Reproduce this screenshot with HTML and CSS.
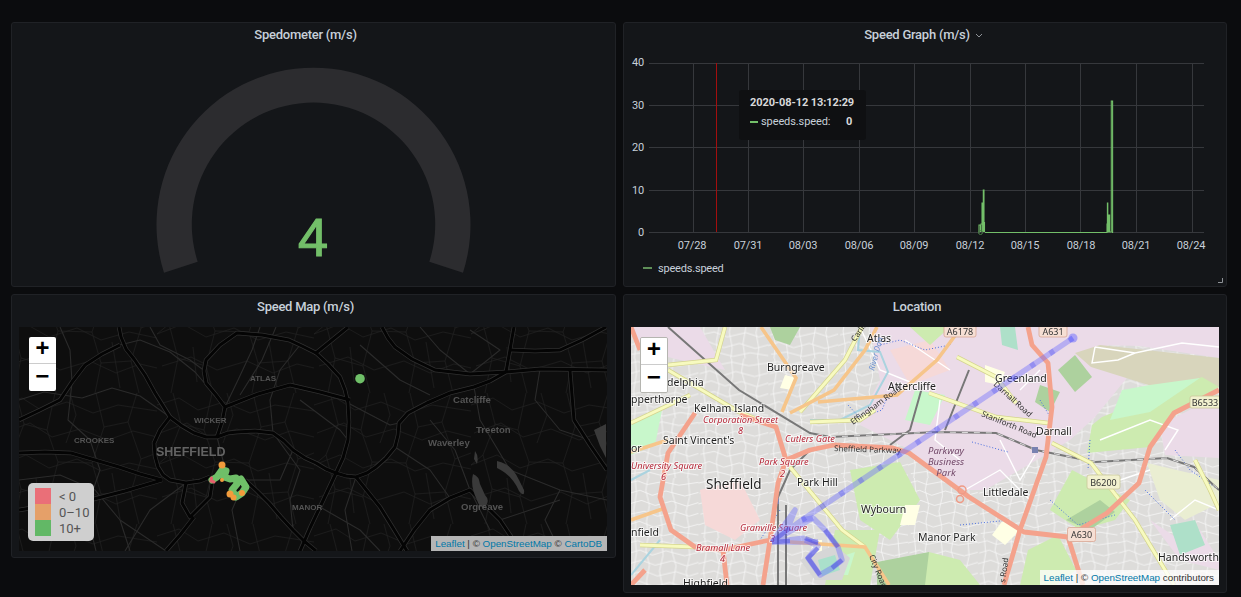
FILE: index.html
```html
<!DOCTYPE html>
<html lang="en">
<head>
<meta charset="utf-8">
<title>Speed dashboard</title>
<link rel="stylesheet" href="styles.css">
</head>
<body>
<main class="dash">

<section class="panel panel-top">
  <header class="title"><span>Spedometer (m/s)</span><i class="title-slot"></i></header>
  <svg class="gauge" viewBox="12 45 603 241" aria-label="Gauge">
    <path class="gauge-arc" d="M164 272.7A157 157 0 1 1 463 272.7L429.3 261.7A121.7 121.7 0 1 0 197.7 261.7Z"/>
    <text class="gauge-value" x="313" y="256">4</text>
  </svg>
</section>

<section class="panel panel-top graph-panel">
  <header class="title"><span>Speed Graph (m/s)</span><i class="title-slot"><svg class="chev" viewBox="0 0 16 16"><path d="M5 7l3 3 3-3"/></svg></i></header>
  <svg class="graph" viewBox="624 46 602 212">
    <g class="grid">
      <path d="M649 63.5H1204M649 105.5H1204M649 147.5H1204M649 190.5H1204M649 232.5H1204"/>
      <path d="M693.5 63V232M748.5 63V232M803.5 63V232M859.5 63V232M914.5 63V232M970.5 63V232M1025.5 63V232M1080.5 63V232M1136.5 63V232M1192.5 63V232"/>
    </g>
    <path class="redline" d="M716.5 63V232"/>
    <g class="ytick">
      <text x="644" y="66">40</text><text x="644" y="109">30</text><text x="644" y="151">20</text><text x="644" y="194">10</text><text x="644" y="236">0</text>
    </g>
    <g class="xtick">
      <text x="692" y="249">07/28</text><text x="748" y="249">07/31</text><text x="803" y="249">08/03</text><text x="859" y="249">08/06</text><text x="914" y="249">08/09</text><text x="970" y="249">08/12</text><text x="1025" y="249">08/15</text><text x="1081" y="249">08/18</text><text x="1136" y="249">08/21</text><text x="1191" y="249">08/24</text>
    </g>
    <path class="series" d="M979 232.5V225H980.5V232M981 232V224H982V203H982.6V232M983.3 232V190H984V232M984.5 232V222M985 232.5H1107V224H1107.4V203H1107.8V232H1108.6V215H1109.6V232H1111.3V101H1112.6V232.5H1112"/>
    <circle class="series-dot" cx="980.5" cy="232.5" r="2"/>
  </svg>
  <div class="legend"><i class="legend-line"></i><span>speeds.speed</span></div>
  <div class="tooltip">
    <div class="tip-time">2020-08-12 13:12:29</div>
    <div class="tip-row"><i class="tip-line"></i><span class="tip-name">speeds.speed:</span><b>0</b></div>
  </div>
  <svg class="resize" viewBox="0 0 6 6"><path d="M5.5 1V5.5H1"/></svg>
</section>

<section class="panel panel-map-a">
  <header class="title"><span>Speed Map (m/s)</span><i class="title-slot"></i></header>
  <div class="map map-dark">
    <svg class="map-svg" viewBox="19 327 588 224">
      <defs>
        <pattern id="dark-streets" width="157" height="131" patternUnits="userSpaceOnUse">
          <path class="dk-minor" d="M0 12L22 5 41 17 67 9 93 20 118 12 157 18M3 40L30 30 52 44 80 36 108 47 133 38 157 44M0 72L26 62 49 75 77 66 101 78 129 70 157 76M5 104L34 95 60 108 90 99 116 111 140 102 157 106"/>
          <path class="dk-minor" d="M16 0L24 31 12 62 21 96 14 131M55 0L47 37 58 69 49 104 56 131M96 0L104 34 92 70 101 101 95 131M137 0L128 29 141 66 131 99 139 131"/>
          <path class="dk-minor" d="M24 31L47 37M58 69L92 70M104 34L128 29M21 96L49 104M101 101L131 99M12 62L0 72M141 66L157 60M70 0L76 22 66 50M112 80L120 126M36 85L40 120"/>
        </pattern>
        <g id="dk-roads">
          <path d="M119 327L121 337 126 349 134 359 145 375 155 393 170 417 160 430 154 443 155 456 158 467 163 475 170 480 186 483 200 481 210 477"/>
          <path d="M170 417L182 426 194 433 206 437 217 437 228 433 237 432 255 431 273 433 284 441 293 450 305 458 316 463 326 469 336 473 346 476 356 477 367 473 376 467 386 458 395 447 398 435 399 423 408 413 427 403 450 393 474 387 490 381 506 372 540 369 607 370"/>
          <path d="M348 327L332 340 316 353 328 364 340 377 345 390 348 403 349 422 348 440 343 458 336 473 328 490 320 507 310 528 300 551"/>
          <path d="M382 327L388 338 395 347 412 359 435 370 470 374 506 372"/>
          <path d="M217 437L222 422 225 407 216 395 206 383 204 371 206 360 220 345 237 333 262 335 289 340 302 346 316 353"/>
          <path d="M19 453L45 452 71 453 95 460 119 467 140 474 162 480"/>
          <path d="M186 483L182 503 190 517 200 507 210 497 213 477M194 517L180 535 166 551"/>
          <path d="M245 480L257 491 269 503 281 517 293 530 304 541 316 551"/>
          <path d="M19 420L40 410 60 400 72 382 85 365 102 354 120 345"/>
          <path d="M356 477L368 492 380 507 393 528 407 551"/>
          <path d="M514 327L512 338 510 350 506 372M570 370L572 395 574 420 590 445 607 470"/>
          <path d="M225 407L258 394 290 385 320 392 350 400"/>
          <path d="M19 510L55 504 90 500 125 491 162 480"/>
          <path d="M400 551L414 530 430 510 450 498 470 490 485 505 500 520 510 535 520 551"/>
          <path d="M606 327L582 340 560 350 535 351 510 350"/>
        </g>
      </defs>
      <rect class="dk-land" x="19" y="327" width="588" height="224"/>
      <rect class="dk-texture" x="19" y="327" width="588" height="224"/>
      <g class="dk-second">
        <path d="M19 400L44 392 82 398 112 388 140 396 170 417"/>
        <path d="M60 327L70 350 72 382 68 420 90 440 100 470 86 510 96 551"/>
        <path d="M19 480L60 475 95 490 120 520 130 551"/>
        <path d="M150 327L160 345 190 360 206 372M120 345L140 340 170 352 195 372 225 407"/>
        <path d="M260 327L252 350 238 380 225 407M276 327L262 360 240 395M300 345L280 370 270 400 273 433"/>
        <path d="M348 403L390 425 399 423M300 400L340 430 348 440M360 345L400 380 430 395"/>
        <path d="M293 450L280 480 245 480 228 480 217 437M245 480L232 510 240 551M273 433L300 470 290 500 293 530"/>
        <path d="M395 447L430 470 450 498M430 420L455 450 470 490 490 530M474 387L480 420 510 470 560 490 607 500"/>
        <path d="M540 369L535 400 560 430 590 440M470 374L500 350 470 330M420 327L440 350 470 374"/>
        <path d="M356 477L345 510 352 551M320 507L360 530 380 551M120 520L166 551M186 483L150 510 125 551"/>
        <path d="M560 490L545 520 560 551M500 520L560 500"/>
      </g>
      <use href="#dk-roads" class="dk-case"/>
      <use href="#dk-roads" class="dk-road"/>
      <path class="dk-lake" d="M475 451Q479 456 477 464L474 459ZM473 474Q479 476 480 484L485 495Q490 500 486 506 480 510 477 500 470 486 473 474ZM497 461Q512 464 519 480L524 490Q525 498 519 491 512 475 497 468Z"/>
      <path class="dk-lake" d="M594 430L606 424V458L600 446Z"/>
      <g class="dk-label">
        <text class="dk-city" x="156" y="456">SHEFFIELD</text>
        <text x="250" y="381">ATLAS</text>
        <text x="194" y="423">WICKER</text>
        <text x="74" y="443">CROOKES</text>
        <text x="292" y="510">MANOR</text>
        <text class="dk-town" x="453" y="403">Catcliffe</text>
        <text class="dk-town" x="476" y="433">Treeton</text>
        <text class="dk-town" x="428" y="446">Waverley</text>
        <text class="dk-town" x="461" y="510">Orgreave</text>
      </g>
      <path class="pts" d="M212 480L217 477 222 470 226 471 224 477 230 479 236 478 237 484 232 490 236 497 242 493 246 487 241 479"/>
      <circle class="pt-green" cx="360" cy="378.7" r="4.8"/>
      <circle class="pt-orange" cx="222" cy="465" r="3.5"/>
      <circle class="pt-orange" cx="230" cy="494" r="3.5"/>
      <circle class="pt-orange" cx="233.5" cy="497.5" r="3"/>
      <circle class="pt-orange" cx="242" cy="493" r="3"/>
      <circle class="pt-orange" cx="222" cy="480" r="2"/>
      <path class="pts-red" d="M211.5 478L211 481 214 482"/>
    </svg>
    <div class="zoom"><button>+</button><button>−</button></div>
    <div class="speed-legend">
      <div class="sl-row"><i class="sw sw-red"></i><span>&lt; 0</span></div>
      <div class="sl-row"><i class="sw sw-orange"></i><span>0–10</span></div>
      <div class="sl-row"><i class="sw sw-green"></i><span>10+</span></div>
    </div>
    <div class="attr attr-dark"><a>Leaflet</a> | © <a>OpenStreetMap</a> © <a>CartoDB</a></div>
  </div>
</section>

<section class="panel panel-map-b">
  <header class="title"><span>Location</span><i class="title-slot"></i></header>
  <div class="map map-light">
    <svg class="map-svg" viewBox="631 327 588 258">
      <defs>
        <pattern id="lt-streets" width="97" height="83" patternUnits="userSpaceOnUse" patternTransform="scale(0.72)">
          <path class="lt-street" d="M0 7L13 4 26 9 47 5 70 10 97 6M2 21L16 17 33 24 52 18 78 25 97 20M0 36L18 31 37 38 60 32 81 39 97 34M3 50L22 46 40 53 66 47 84 53 97 49M0 65L15 60 35 68 57 62 79 69 97 64M4 77L25 74 48 80 72 75 97 79"/>
          <path class="lt-street" d="M9 0L11 21 7 45 10 65 8 83M27 0L24 17 29 38 25 60 28 83M46 0L48 24 43 46 47 68 45 83M63 0L60 18 66 39 62 62 65 83M83 0L85 25 80 47 84 69 82 83"/>
        </pattern>
        <g id="yel">
          <path d="M929 393L996 417 1048 423M1052 443L1091 463 1135 520 1174 585"/>
          <path d="M957 357L996 377 1016 403M790 467L842 530 865 547"/>
          <path d="M668 370L739 412 776 427M631 423L690 395M725 327L716 360 668 365"/>
          <path d="M862 327L845 360 800 412M1195 460L1210 490 1219 510"/>
          <path d="M810 422L860 420 875 410M640 545L695 547"/>
        </g>
      </defs>
      <rect class="lt-base" x="631" y="327" width="588" height="258"/>
      <rect class="lt-texture" x="631" y="327" width="588" height="258"/>

      <path class="lu-pink" d="M870 327H1085L1135 368 1095 417 1070 440 1040 458 985 490H965L930 470 910 450 860 425 870 400 880 380Z"/>
      <path class="lu-pink" d="M1083 327H1219V358L1140 346 1100 345Z"/>
      <path class="lu-pink" d="M631 327H700L725 370 680 360 640 350Z"/>
      <path class="lu-pink" d="M1160 425L1219 395V458L1165 455Z"/>
      <path class="lu-pink" d="M1150 520L1180 540 1200 530 1219 560V570L1180 560Z"/>
      <path class="lu-com" d="M700 490L740 480 760 520 735 540 705 525Z"/>
      <path class="lu-com" d="M890 350L930 340 950 370 910 385Z"/>
      <path class="lu-air" d="M1075 353L1100 345 1219 358V387L1155 387 1091 367Z"/>
      <path class="lu-grass" d="M1102 417L1202 377 1219 387 1174 413 1150 447 1087 453 1092 425Z"/>
      <path class="lu-light" d="M1122 390L1150 385 1200 378 1150 412 1110 420Z"/>
      <path class="lu-forest" d="M1058 370L1075 355 1092 377 1075 392Z"/>
      <path class="lu-farm" d="M1147 463L1219 480V503L1185 520 1160 500Z"/>
      <path class="lu-forest" d="M877 562L929 552V585H877Z"/>
      <path class="lu-grass" d="M929 552L960 560 980 585H925ZM835 530L880 530 870 585H825Z"/>
      <path class="lu-grass" d="M1072 470L1130 500 1115 520 1080 530 1050 510Z"/>
      <path class="lu-forest" d="M1066 520L1100 500 1115 512 1090 530Z"/>
      <path class="lu-grass" d="M1028 550L1058 535 1076 570 1056 585H1020Z"/>
      <path class="lu-grass" d="M910 327L950 327 930 345ZM850 470L900 462 920 500 890 540 860 520Z"/>
      <path class="lu-light" d="M915 390L945 395 930 425 905 420ZM631 425L662 410 655 445 631 455ZM830 560L855 552 848 575 825 575Z"/>
      <path class="lu-forest" d="M770 327H800L790 345 775 340ZM1040 385L1060 392 1050 412 1035 402Z"/>
      <path class="lu-yellow" d="M812 540H822V568H812ZM1003 520L1020 530 1005 545 992 535ZM905 505H920L915 525H900Z"/>
      <path class="lu-yellow" d="M785 375L797 378 792 390 780 388ZM985 365L1005 372 1000 385 985 382Z"/>
      <path class="lu-teal" d="M1170 525L1195 520 1205 545 1180 555ZM1000 327H1015L1018 350 1002 345Z"/>
      <path class="lu-stadium" d="M800 560L835 545 850 558 842 580 815 580Z"/>
      <path class="lu-pitch" d="M818 560L835 555 840 570 822 576Z"/>

      <g class="lt-white">
        <path d="M1095 347L1135 353 1182 343 1219 347M1095 347L1092 363 1118 360 1135 353"/>
        <path d="M1000 440L1020 480 1035 455M965 490L1000 470 1030 500 1040 480M940 400L935 440 960 460M1020 390L1040 370"/>
        <path d="M1100 440L1150 420 1178 430 1165 450M1170 520L1195 500 1219 510M1120 480L1150 470"/>
        <path d="M860 327L880 370 930 390M905 340L950 370"/>
      </g>

      <path class="river" d="M860 327L858 350 880 352 888 372 870 405 840 420 810 420M631 480L650 470M660 540L631 575"/>
      <path class="river-dots" d="M955 327L950 345 925 350 900 340 880 345M848 405L860 418 882 410 888 395M972 442L1008 452M1040 400L1052 420M1090 440L1088 470M1175 450L1190 470 1219 490M1145 490L1175 520M1050 500L1078 525 1115 515M960 525L1010 520M780 510L760 540"/>

      <g class="rail">
        <path d="M668 327L739 390 810 433 830 437 937 432 996 433 1036 450 1095 462 1167 458 1194 467 1219 490"/>
        <path d="M969 370L945 430M923 384L910 430 890 445"/>
        <path d="M778 585V497L790 470 810 450M786 585V505"/>
      </g>
      <path class="rail-dash" d="M830 437L937 432 996 433 1036 450 1095 462 1167 458 1194 467 1219 490"/>
      <rect class="station" x="1032" y="447" width="6" height="6"/>
      <rect class="station" x="774" y="498" width="5" height="6"/>

      <use href="#yel" class="yel-case"/>
      <use href="#yel" class="yel-fill"/>

      <g class="orange">
        <path d="M761 327L796 378 782 412M790 413L834 390 865 350 877 327"/>
        <path d="M818 402L897 395 937 360 957 333M790 542L865 547 889 585"/>
        <path d="M631 520L665 508M631 452L668 440"/>
      </g>
      <g class="trunk">
        <path d="M1219 390L1174 413 1150 447 1139 483 1107 513 1068 537 1024 532 969 497 909 453 893 448 834 445 810 450 786 460"/>
        <path d="M1028 327L1032 345 1048 363 1052 407 1046 457 1020 530 1004 585"/>
        <path d="M631 327L640 350M695 413L668 453 660 497 671 530 695 547 723 550 770 540 778 483 786 460 776 427 740 415"/>
        <path d="M770 540L763 585M723 550L727 585M1068 537L1083 585M631 585L645 570"/>
      </g>
      <circle class="round" cx="962" cy="490" r="4"/>
      <circle class="round" cx="960" cy="499" r="3.5"/>

      <g class="lt-town">
        <text x="867" y="342">Atlas</text>
        <text x="767" y="371">Burngreave</text>
        <text x="667" y="386">delphia</text>
        <text x="631" y="403">pperthorpe</text>
        <text x="694" y="412">Kelham Island</text>
        <text x="888" y="390">Attercliffe</text>
        <text x="995" y="382">Greenland</text>
        <text x="1036" y="435">Darnall</text>
        <text x="663" y="444">Saint Vincent's</text>
        <text class="lt-city" x="706" y="489">Sheffield</text>
        <text x="797" y="486">Park Hill</text>
        <text x="983" y="496">Littledale</text>
        <text x="861" y="513">Wybourn</text>
        <text x="918" y="541">Manor Park</text>
        <text x="1158" y="561">Handsworth</text>
        <text x="631" y="536">nfield</text>
        <text x="631" y="452">or</text>
        <text x="683" y="587">Highfield</text>
      </g>
      <g class="lt-tram">
        <text x="703" y="423">Corporation Street</text>
        <text x="738" y="434">8</text>
        <text x="785" y="442">Cutlers Gate</text>
        <text x="631" y="469">University Square</text>
        <text x="661" y="480">6</text>
        <text x="759" y="465">Park Square</text>
        <text x="780" y="477">2</text>
        <text x="740" y="531">Granville Square</text>
        <text x="770" y="542">3</text>
        <text x="696" y="551">Bramall Lane</text>
        <text x="720" y="562">4</text>
      </g>
      <g class="lt-park">
        <text x="946" y="454">Parkway</text>
        <text x="946" y="465">Business</text>
        <text x="946" y="476">Park</text>
      </g>
      <g class="lt-road">
        <text x="834" y="451" transform="rotate(2 834 451)">Sheffield Parkway</text>
        <text x="853" y="425" transform="rotate(-36 853 425)">Effingham Road</text>
        <text x="993" y="385" transform="rotate(42 993 385)">Darnall Road</text>
        <text x="981" y="416" transform="rotate(22 981 416)">Staniforth Road</text>
        <text x="869" y="556" transform="rotate(68 869 556)">City Road</text>
        <text x="855" y="342" transform="rotate(-55 855 342)">Carlisle</text>
        <text x="1005" y="583" transform="rotate(-82 1005 583)">s Road</text>
      </g>
      <text class="lt-river" x="874" y="371" transform="rotate(-75 874 371)">River Don</text>

      <g class="shield-a">
        <rect x="944" y="324" width="32" height="13" rx="2"/>
        <rect x="1039" y="324" width="28" height="13" rx="2"/>
        <rect x="1067.5" y="527.5" width="28" height="14" rx="2"/>
      </g>
      <g class="shield-b">
        <rect x="1190" y="396" width="34" height="12" rx="2"/>
        <rect x="1087" y="475" width="33" height="14" rx="2"/>
      </g>
      <g class="shield-text">
        <text x="960" y="335">A6178</text>
        <text x="1053" y="335">A631</text>
        <text x="1205" y="406">B6533</text>
        <text x="1103.5" y="486">B6200</text>
        <text x="1081.5" y="538">A630</text>
      </g>

      <g class="route">
        <path class="route-line" d="M1073 338L802 520 772 542M772 542L818 542M772 542L795 510 787 530M772 542L813 518M772 542L805 538"/>
        <path class="route-line" d="M802 520L813 518 825 530 838 547 842 560 832 568 820 575 808 558 818 546 805 540"/>
        <path class="route-dash" d="M1073 338L802 520"/>
        <path class="route-heavy" d="M825 530L838 547M842 560L832 568M820 575L808 558 818 548M772 542L790 528M772 542L790 541M805 538L818 543"/>
        <circle class="route-end" cx="1073" cy="338" r="4.5"/>
      </g>
    </svg>
    <div class="zoom zoom-framed"><button>+</button><button>−</button></div>
    <div class="attr attr-light"><a>Leaflet</a> | © <a>OpenStreetMap</a> contributors</div>
  </div>
</section>

</main>
</body>
</html>
```

FILE: styles.css
```css
* { box-sizing: border-box; }

html, body {
  margin: 0;
  height: 597px;
  overflow: hidden;
  background: #0b0c0e;
}

body {
  font-family: Roboto, "Liberation Sans", sans-serif;
  color: #c7d0d9;
}

.dash {
  display: grid;
  grid-template-columns: 605px 604px;
  grid-template-rows: 265px auto;
  column-gap: 7px;
  row-gap: 7px;
  align-items: start;
  padding: 22px 0 0 11px;
}

.panel {
  position: relative;
  background: #141619;
  border: 1px solid #202226;
  border-radius: 3px;
}

.panel-top { height: 265px; }
.panel-map-a { height: 264px; }
.panel-map-b { height: 299px; }

.title {
  display: flex;
  justify-content: center;
  align-items: center;
  height: 23px;
  padding-top: 1px;
  font-size: 13px;
  font-weight: 500;
  letter-spacing: -0.25px;
  line-height: 22px;
  color: #c7d0d9;
}

.title-slot {
  display: block;
  width: 16px;
  height: 16px;
}

.chev {
  display: block;
  width: 16px;
  height: 16px;
  margin-left: 1px;
}

.chev path {
  fill: none;
  stroke: #8e9297;
  stroke-width: 1;
}

/* gauge */
.gauge {
  position: absolute;
  left: 0;
  top: 22px;
  width: 603px;
  height: 241px;
}

.gauge-arc { fill: #2c2c2f; }

.gauge-value {
  fill: #73bf69;
  stroke: #73bf69;
  stroke-width: 1.2px;
  font-family: "Liberation Sans", sans-serif;
  font-size: 54px;
  text-anchor: middle;
}

/* graph */
.graph {
  display: block;
  width: 602px;
  height: 212px;
}

.grid path {
  fill: none;
  stroke: #36383c;
  stroke-width: 1;
}

.redline {
  fill: none;
  stroke: #a30e0e;
  stroke-width: 1;
}

.ytick text,
.xtick text {
  fill: #c7d0d9;
  font-size: 11px;
  letter-spacing: -0.15px;
}

.ytick text { text-anchor: end; }
.xtick text { text-anchor: middle; }

.series {
  fill: none;
  stroke: #73bf69;
  stroke-width: 1.1;
}

.series-dot {
  fill: none;
  stroke: #4b7c47;
  stroke-width: 1;
}

.legend {
  display: flex;
  align-items: center;
  height: 20px;
  padding-left: 19px;
  font-size: 11px;
  letter-spacing: -0.2px;
  color: #c7d0d9;
}

.legend-line {
  display: block;
  width: 9px;
  height: 2px;
  margin-right: 6px;
  background: #5f8f58;
}

.tooltip {
  position: absolute;
  left: 115px;
  top: 67px;
  width: 127px;
  height: 50px;
  padding: 5px 11px;
  background: #0f1012;
  border-radius: 3px;
  font-size: 11px;
  letter-spacing: -0.1px;
}

.tip-time {
  font-weight: 700;
  line-height: 16px;
  color: #d8d9da;
  white-space: nowrap;
}

.tip-row {
  display: flex;
  align-items: center;
  margin-top: 2px;
  line-height: 18px;
  white-space: nowrap;
}

.tip-line {
  display: block;
  width: 8px;
  height: 2px;
  margin-right: 3px;
  background: #73bf69;
}

.tip-name { width: 85px; }
.tip-row b { color: #d8d9da; }

.resize {
  position: absolute;
  right: 3px;
  bottom: 3px;
  width: 6px;
  height: 6px;
}

.resize path {
  fill: none;
  stroke: #8e9297;
  stroke-width: 1;
}

/* maps */
.map {
  position: relative;
  width: 588px;
  margin: 9px 0 0 7px;
  overflow: hidden;
}

.map-dark { height: 224px; }
.map-light { height: 258px; }

.map-svg {
  display: block;
  width: 100%;
  height: 100%;
  filter: blur(0.4px);
}

.zoom {
  position: absolute;
  left: 10px;
  top: 10px;
  display: flex;
  flex-direction: column;
  width: 27px;
  border-radius: 2px;
  overflow: hidden;
}

.zoom button {
  display: block;
  width: 100%;
  height: 27px;
  padding: 0;
  border: 0;
  border-bottom: 1px solid #ccc;
  background: #fff;
  color: #000;
  font-family: "Liberation Mono", monospace;
  font-size: 24px;
  font-weight: 700;
  line-height: 26px;
  text-align: center;
}

.zoom button:last-child { border-bottom: 0; }

.zoom-framed {
  left: 9px;
  width: 28px;
  border: 1px solid #b5b5b0;
}

.speed-legend {
  position: absolute;
  left: 9px;
  top: 156px;
  width: 66px;
  height: 58px;
  padding: 5px 7px;
  border-radius: 5px;
  background: #cfcfcf;
  color: #555;
  font-size: 13px;
}

.sl-row {
  display: flex;
  align-items: center;
  height: 16px;
  white-space: nowrap;
}

.sw {
  display: block;
  flex: none;
  width: 16px;
  height: 16px;
  margin-right: 8px;
}

.sw-red { background: #ea6f78; }
.sw-orange { background: #e5a069; }
.sw-green { background: #62b866; }

.attr {
  position: absolute;
  right: 0;
  bottom: 0;
  height: 15px;
  padding: 0 5px 0 4px;
  font-family: "Liberation Sans", sans-serif;
  font-size: 9.8px;
  line-height: 15px;
  color: #333;
  white-space: nowrap;
}

.attr a { color: #0078a8; }
.attr-dark { background: #b5b5b5; }
.attr-light { background: rgba(255, 255, 255, 0.75); }

/* dark map */
.dk-land { fill: #0e0e0e; }
.dk-texture { fill: url(#dark-streets); }

.dk-minor {
  fill: none;
  stroke: #212121;
  stroke-width: 0.7;
}

.dk-second path {
  fill: none;
  stroke: #2b2b2b;
  stroke-width: 1.1;
  stroke-linejoin: round;
}

.dk-case {
  fill: none;
  stroke: #303030;
  stroke-width: 4.4;
  stroke-linejoin: round;
}

.dk-road {
  fill: none;
  stroke: #040404;
  stroke-width: 3;
  stroke-linejoin: round;
}

.dk-lake { fill: #3a3a3a; }

.dk-label text {
  fill: #545454;
  font-family: "Liberation Sans", sans-serif;
  font-size: 8px;
  font-weight: 700;
}

.dk-label .dk-city {
  font-size: 12.5px;
  fill: #636363;
}

.dk-label .dk-town {
  font-size: 9.6px;
}

.pts {
  fill: none;
  stroke: #6fbf68;
  stroke-width: 7;
  stroke-linecap: round;
  stroke-linejoin: round;
}

.pt-green { fill: #6fbf68; }
.pt-orange { fill: #f29b3c; }

.pts-red {
  fill: none;
  stroke: #e5606d;
  stroke-width: 3;
  stroke-linecap: round;
}

/* light map */
.lt-base { fill: #dddcda; }
.lt-texture { fill: url(#lt-streets); }

.lt-street {
  fill: none;
  stroke: #f8f8f8;
  stroke-width: 1.1;
}

.lu-pink { fill: #ebdbe8; }
.lu-com { fill: #f6d9d8; }
.lu-air { fill: #d8d5bc; }
.lu-grass { fill: #cdebb0; }
.lu-light { fill: #c8f7cb; }
.lu-forest { fill: #add19e; }
.lu-farm { fill: #eaeed2; }
.lu-yellow { fill: #ffffe5; }
.lu-teal { fill: #aee0c9; }
.lu-pitch { fill: #aae0cb; }
.lu-stadium { fill: #d6d6d6; }

.lt-white path {
  fill: none;
  stroke: #fff;
  stroke-width: 1.4;
}

.river {
  fill: none;
  stroke: #aad3df;
  stroke-width: 2;
}

.river-dots {
  fill: none;
  stroke: #4a6fe0;
  stroke-width: 1;
  stroke-dasharray: 1 2;
}

.rail path {
  fill: none;
  stroke: #777;
  stroke-width: 2;
}

.rail-dash {
  fill: none;
  stroke: #ddd;
  stroke-width: 1;
  stroke-dasharray: 6 6;
}

.station { fill: #7981b0; }

.yel-case {
  fill: none;
  stroke: #d4d48e;
  stroke-width: 4.4;
}

.yel-fill {
  fill: none;
  stroke: #f7fabf;
  stroke-width: 3;
}

.orange path {
  fill: none;
  stroke: #f6c58a;
  stroke-width: 3.6;
}

.trunk path {
  fill: none;
  stroke: #f4a28c;
  stroke-width: 4.8;
  stroke-linejoin: round;
}

.round {
  fill: none;
  stroke: #ef9a85;
  stroke-width: 1.5;
}

.lt-town text,
.lt-tram text,
.lt-park text,
.lt-road text,
.lt-river,
.shield-text text {
  font-family: "Noto Sans", "Open Sans", sans-serif;
}

.lt-town text {
  fill: #1f1f1f;
  font-size: 10.5px;
  paint-order: stroke;
  stroke: rgba(255, 255, 255, 0.7);
  stroke-width: 2px;
}

.lt-town .lt-city { font-size: 13.5px; }

.lt-tram text {
  fill: #b5293a;
  font-size: 9.2px;
  font-style: italic;
  paint-order: stroke;
  stroke: rgba(255, 255, 255, 0.7);
  stroke-width: 2px;
}

.lt-park text {
  fill: #734a6a;
  font-size: 9.5px;
  font-style: italic;
  text-anchor: middle;
}

.lt-road text {
  fill: #333;
  font-size: 8px;
}

.lt-river {
  fill: #6a8fd0;
  font-size: 8px;
  font-style: italic;
}

.shield-a rect {
  fill: #f6dfd4;
  stroke: #d9a794;
  stroke-width: 0.8;
}

.shield-b rect {
  fill: #f2f1cf;
  stroke: #c9c89a;
  stroke-width: 0.8;
}

.shield-text text {
  fill: #333;
  font-size: 9px;
  text-anchor: middle;
}

.route-line {
  fill: none;
  stroke: #6a6aff;
  stroke-width: 5.5;
  stroke-opacity: 0.4;
  stroke-linejoin: round;
}

.route-dash {
  fill: none;
  stroke: #4a4af0;
  stroke-width: 5.5;
  stroke-opacity: 0.3;
  stroke-dasharray: 5 18;
}

.route-heavy {
  fill: none;
  stroke: #3a3ae0;
  stroke-width: 4.5;
  stroke-opacity: 0.45;
}

.route-end {
  fill: #6a6aff;
  fill-opacity: 0.5;
}
```
